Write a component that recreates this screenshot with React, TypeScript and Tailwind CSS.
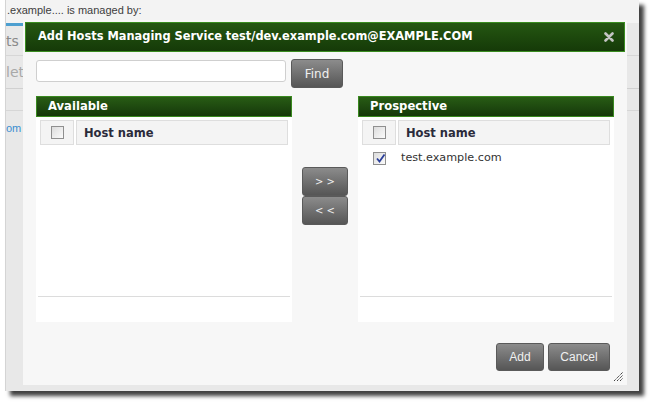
import React from "react";

const dv = "font-['DejaVu_Sans',Verdana,sans-serif]";
const ar = "font-['Liberation_Sans',Arial,sans-serif]";

const Checkbox = ({ checked }: { checked?: boolean }) => (
    <span className="relative block w-[13px] h-[13px] border border-[#8f8f8f] bg-gradient-to-br from-[#dcdcdc] to-[#fbfbfb]">
        {checked && (
            <svg className="absolute left-[1px] top-[0px]" width="11" height="11" viewBox="0 0 11 11">
                <path d="M2 5.5 L4.5 8.5 L9.5 1.5" stroke="#2a3f9a" strokeWidth="1.8" fill="none" />
            </svg>
        )}
    </span>
);

const GrayButton = ({ label, className }: { label: string; className: string }) => (
    <button
        className={`flex items-center justify-center rounded-[3px] border border-[#5a5a5a] bg-gradient-to-b from-[#8c8c8c] to-[#565656] text-[#f0f0f0] ${className}`}
    >
        {label}
    </button>
);

const Panel = ({ title, rows }: { title: string; rows: string[] }) => (
    <div className="w-[256px] h-[226px] flex flex-col bg-white">
        <div className={`h-[21px] flex items-center pl-[11px] pt-[1px] border border-[#39891f] bg-gradient-to-b from-[#285c15] to-[#16390a] text-white text-[11.6px] font-bold ${dv}`}>
            {title}
        </div>
        <div className="flex gap-[2px] px-[4px] pt-[3px]">
            <div className="w-[34px] h-[25px] flex items-center justify-center bg-[#f4f4f4] border border-[#dedede]">
                <Checkbox />
            </div>
            <div className={`flex-1 h-[25px] flex items-center pl-[7px] pt-[2px] bg-[#f4f4f4] border border-[#dedede] text-[11.5px] font-bold text-[#2b2b3b] ${dv}`}>
                Host name
            </div>
        </div>
        <div className="flex-1 flex flex-col px-[4px]">
            {rows.map((r) => (
                <div key={r} className="flex gap-[2px] h-[26px] items-center">
                    <div className="w-[34px] flex justify-center">
                        <Checkbox checked />
                    </div>
                    <div className={`pl-[3px] pt-[1px] text-[11.2px] text-[#333] ${dv}`}>{r}</div>
                </div>
            ))}
        </div>
        <div className="mx-[2px] border-t border-[#dcdcdc] h-[26px]" />
    </div>
);

const Dialog = () => (
    <div className="absolute left-[17px] top-[20px] w-[604px] h-[365px] bg-[#f7f7f7] flex flex-col">
        <div className={`mx-[2px] mt-[2px] h-[30px] flex items-center justify-between pl-[12px] pr-[10px] border border-[#3a8d20] bg-gradient-to-b from-[#255712] to-[#153a08] text-white text-[11.4px] font-bold ${dv}`}>
            <span>Add Hosts Managing Service test/dev.example.com@EXAMPLE.COM</span>
            <svg width="10" height="10" viewBox="0 0 10 10">
                <path d="M1.5 1.5 L8.5 8.5 M8.5 1.5 L1.5 8.5" stroke="#c4c4c4" strokeWidth="2.6" strokeLinecap="round" />
            </svg>
        </div>
        <div className="flex items-start gap-[5px] pl-[13px] mt-[7px]">
            <input className="mt-[1px] w-[250px] h-[22px] bg-white border border-[#cfcfcf] rounded-[3px] outline-none" />
            <GrayButton label="Find" className={`w-[52px] h-[29px] text-[12px] ${dv}`} />
        </div>
        <div className="flex pl-[13px] mt-[8px]">
            <Panel title="Available" rows={[]} />
            <div className="w-[66px] flex flex-col items-center pt-[71px]">
                <GrayButton label="> >" className={`w-[46px] h-[29px] text-[10px] ${dv}`} />
                <GrayButton label="< <" className={`w-[46px] h-[29px] text-[10px] ${dv}`} />
            </div>
            <Panel title="Prospective" rows={["test.example.com"]} />
        </div>
        <div className="flex justify-end gap-[4px] pr-[17px] mt-[21px]">
            <GrayButton label="Add" className={`w-[48px] h-[28px] text-[12px] ${ar}`} />
            <GrayButton label="Cancel" className={`w-[62px] h-[28px] text-[12px] ${ar}`} />
        </div>
        <div className="flex justify-end pr-[3px]">
            <svg width="11" height="11" viewBox="0 0 11 11">
                <path d="M1 10 L10 1 M4 10 L10 4 M7 10 L10 7" stroke="#333" strokeWidth="1" strokeDasharray="1.3 0.7" />
            </svg>
        </div>
    </div>
);

export default function App() {
    return (
        <div className="w-[655px] h-[409px] bg-white overflow-hidden">
            <div className="relative ml-[5px] w-[634px] h-[391px] bg-[#e8e8e8] border-l border-[#d4d4d4] shadow-[5px_5px_4px_rgba(0,0,0,0.75)] overflow-hidden">
                <div className={`h-[23px] bg-[#f3f3f3] pl-[1px] pt-[2px] text-[11px] text-[#3d3d3d] ${ar}`}>
                    .example.... is managed by:
                </div>
                <div className="h-[3px] w-[18px] bg-[#4d9fd0]" />
                <div className={`h-[29px] flex items-center pt-[2px] text-[14px] text-[#8a8a8a] ${dv}`}>ts (</div>
                <div className="border-t border-[#d6d6d6]" />
                <div className={`h-[32px] flex items-center text-[14px] text-[#a8a8a8] ${dv}`}>lete</div>
                <div className="border-t border-[#d0d0d0]" />
                <div className="h-[21px]" />
                <div className="border-t border-[#d6d6d6]" />
                <div className={`h-[34px] flex items-center text-[11px] text-[#3a8ed0] ${ar}`}>om</div>
                <Dialog />
            </div>
        </div>
    );
}
